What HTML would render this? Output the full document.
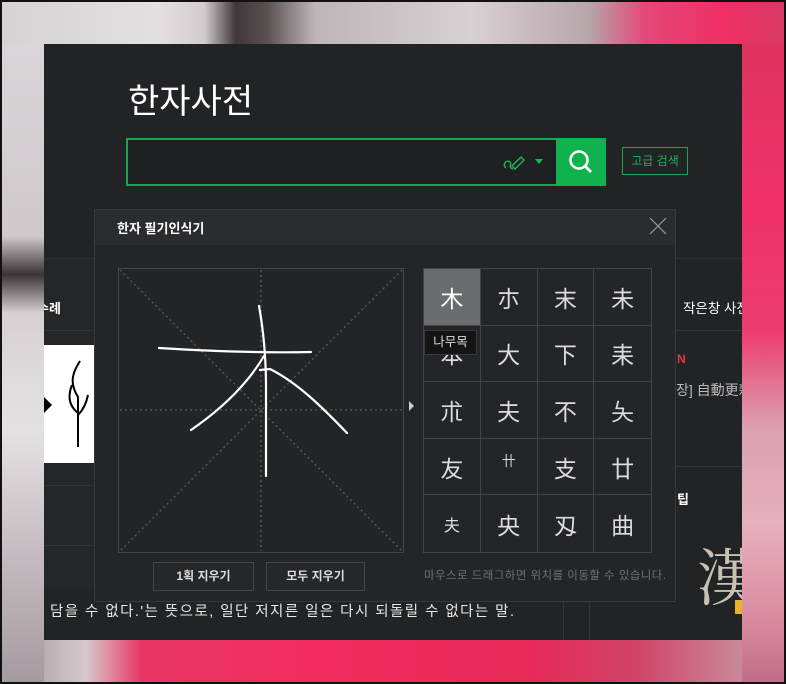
<!DOCTYPE html>
<html><head><meta charset="utf-8"><style>
*{margin:0;padding:0;box-sizing:border-box}
body{width:786px;height:684px;overflow:hidden;position:relative;font-family:"Liberation Sans","Noto Sans CJK KR",sans-serif;
background:linear-gradient(180deg,#d9d4d7 0%,#c8c2c5 40%,#b7aeb2 100%);}
.abs{position:absolute}
.t{color:#fff;white-space:nowrap}
.line{background:#333437;height:1px}
</style></head><body>
<!-- background photo approximation -->
<div class="abs" style="left:0;top:0;width:786px;height:44px;background:linear-gradient(90deg,#d6d2d4 0%,#e4e0e2 20%,#d2cccf 26%,#3f3739 30%,#5a5052 34%,#bdb5b8 40%,#d8d1d3 60%,#b7a5aa 75%,#e5487a 82%,#ef2f66 92%,#d73a62 100%)"></div>
<div class="abs" style="left:0;top:44px;width:44px;height:640px;background:linear-gradient(180deg,#d9d5d8 0%,#cfc9cc 30%,#3a3436 36%,#d6d0d3 42%,#e5e1e3 60%,#c3bbbf 80%,#a59a9f 100%)"></div>
<div class="abs" style="left:742px;top:44px;width:44px;height:640px;background:linear-gradient(180deg,#e0325f 0%,#f0306a 25%,#ec3c70 45%,#dca0b2 60%,#e7b0be 75%,#d98aa0 90%,#c06c85 100%)"></div>
<div class="abs" style="left:44px;top:640px;width:698px;height:44px;background:linear-gradient(90deg,#b8aeb2 0%,#d7c9cd 6%,#e93565 14%,#f22c5e 40%,#e72a58 70%,#d04468 85%,#c9899b 100%)"></div>
<div class="abs" style="left:0;top:0;width:786px;height:684px;border:2px solid #111"></div>

<div class="abs" style="left:44px;top:44px;width:698px;height:596px;background:#222325;overflow:hidden">
  <div class="abs t" style="left:84px;top:30px;font-size:34px;">한자사전</div>
  <div class="abs" style="left:0;top:214px;width:698px;height:1px;background:#2e2f32"></div>
  <div class="abs" style="left:0;top:215px;width:50px;height:330px;background:#252629"></div>
  <div class="abs t" style="left:-7px;top:254px;font-size:13px;font-weight:bold">수례</div>
  <div class="abs line" style="left:0;top:286px;width:50px"></div>
  <div class="abs" style="left:0;top:301px;width:50px;height:118px;background:#fff"></div>
  <svg class="abs" style="left:0;top:301px" width="50" height="118"><path d="M0 52l8 8-8 8z" fill="#000"/><path d="M36 16c-6 10-12 20-2 36v50M28 40c-4 10-4 20 6 28M44 50c-2 10-6 16-10 20" fill="none" stroke="#000" stroke-width="2"/></svg>
  <div class="abs line" style="left:0;top:441px;width:50px"></div>
  <div class="abs line" style="left:0;top:501px;width:50px"></div>
  <div class="abs t" style="left:639px;top:253px;font-size:13.5px">작은창 사전</div>
  <div class="abs line" style="left:632px;top:286px;width:66px"></div>
  <div class="abs" style="left:633px;top:308px;font-size:12px;font-weight:bold;color:#e23b3b">N</div>
  <div class="abs" style="left:632px;top:336px;font-size:14px;color:#bbb;white-space:nowrap">장] 自動更新</div>
  <div class="abs line" style="left:632px;top:422px;width:66px"></div>
  <div class="abs t" style="left:633px;top:445px;font-size:13px;font-weight:bold">팁</div>
  <div class="abs" style="left:653px;top:494px;color:#c9c2b4;font-size:62px;line-height:72px;font-family:'Noto Serif CJK SC',serif">漢</div>
  <div class="abs" style="left:691px;top:556px;width:7px;height:14px;background:#e8b030"></div>
  <div class="abs t" style="left:6px;top:556px;font-size:14.5px;color:#e8e8e8;letter-spacing:1.45px">담을 수 없다.'는 뜻으로, 일단 저지른 일은 다시 되돌릴 수 없다는 말.</div>
  <div class="abs" style="left:519px;top:558px;width:1px;height:38px;background:#333"></div>
  <div class="abs" style="left:545px;top:558px;width:1px;height:38px;background:#333"></div>
</div>

<div class="abs" style="left:126px;top:138px;width:432px;height:48px;border:2px solid #1ca54f;background:#1f2022"></div>
<svg class="abs" style="left:500px;top:150px" width="50" height="26" viewBox="0 0 50 26"><g fill="none" stroke="#1fb456" stroke-width="1.4"><path d="M6 18c-4-3 0-9 4-6 2 2-2 6 3 7"/><path d="M12 16l9-9 3 3-9 9z"/></g><path d="M35 9h8l-4 5z" fill="#1fb456"/></svg>
<div class="abs" style="left:556px;top:138px;width:50px;height:48px;background:#10b250"></div>
<svg class="abs" style="left:565px;top:146px" width="32" height="32" viewBox="0 0 32 32"><circle cx="14" cy="14" r="8.5" fill="none" stroke="#fff" stroke-width="2.6"/><path d="M20 20l6 6" stroke="#fff" stroke-width="2.8"/></svg>
<div class="abs" style="left:622px;top:147px;width:66px;height:28px;border:1px solid #1ca54f;color:#1fb456;font-size:12px;text-align:center;line-height:26px">고급 검색</div>

<!-- popup -->
<div class="abs" style="left:94px;top:209px;width:582px;height:393px;background:#242528;border:1px solid #37383b"></div>
<div class="abs" style="left:95px;top:210px;width:580px;height:35px;background:#2b2c2f"></div>
<div class="abs t" style="left:117px;top:218px;font-size:13px;font-weight:bold">한자 필기인식기</div>
<svg class="abs" style="left:649px;top:217px" width="18" height="18"><path d="M1 1l16 16M17 1L1 17" stroke="#999" stroke-width="1.2"/></svg>

<svg class="abs" style="left:118px;top:268px" width="286" height="285" viewBox="0 0 286 285">
<rect x="0.5" y="0.5" width="285" height="284" fill="#232427" stroke="#46474a"/>
<g stroke="#5a5b5e" stroke-width="1.3" stroke-dasharray="2 3" fill="none">
<path d="M2 2L284 283M284 2L2 283M143 2V283M2 142H284"/></g>
<g fill="none" stroke="#fff" stroke-width="2.2" stroke-linecap="round">
<path d="M41 80C90 83 150 85 193 84"/>
<path d="M141 38C145 60 148 85 148 120C148 160 148 190 148 208"/>
<path d="M146 88C130 115 105 140 73 162"/>
<path d="M142 102L152 101C180 115 205 140 229 165"/>
</g></svg>
<svg class="abs" style="left:409px;top:401px" width="6" height="10"><path d="M0 0l5 5-5 5z" fill="#ccc"/></svg>

<div class="abs" style="left:423px;top:268px;width:229px;height:285px;border:1px solid #444548;display:grid;grid-template-columns:repeat(4,1fr);grid-template-rows:repeat(5,1fr);">
<style>.c{border-right:1px solid #444548;border-bottom:1px solid #444548;color:#ddd;font-size:23px;display:flex;align-items:center;justify-content:center;font-family:"Noto Sans CJK SC",sans-serif}</style>
<div class="c" style="background:#6b6c70;color:#fff">木</div><div class="c">朩</div><div class="c">末</div><div class="c" style="border-right:0">未</div>
<div class="c">本</div><div class="c">大</div><div class="c">下</div><div class="c" style="border-right:0">耒</div>
<div class="c">朮</div><div class="c">夫</div><div class="c">不</div><div class="c" style="border-right:0">夨</div>
<div class="c">友</div><div class="c" style="font-size:14px;align-items:flex-start;padding-top:12px">卄</div><div class="c">支</div><div class="c" style="border-right:0">廿</div>
<div class="c" style="border-bottom:0;font-size:16px">夫</div><div class="c" style="border-bottom:0">央</div><div class="c" style="border-bottom:0">刄</div><div class="c" style="border:0">曲</div>
</div>
<div class="abs" style="left:424px;top:330px;width:53px;height:25px;background:#141415;border:1px solid #3a3a3c;color:#ddd;font-size:12.5px;text-align:center;line-height:23px">나무목</div>

<div class="abs" style="left:153px;top:562px;width:101px;height:29px;border:1px solid #45464a;background:#262729;color:#ddd;font-size:12px;font-weight:bold;text-align:center;line-height:27px">1획 지우기</div>
<div class="abs" style="left:266px;top:562px;width:99px;height:29px;border:1px solid #45464a;background:#262729;color:#ddd;font-size:12px;font-weight:bold;text-align:center;line-height:27px">모두 지우기</div>
<div class="abs" style="left:424px;top:567px;font-size:11.5px;color:#6f7073;white-space:nowrap;letter-spacing:0.45px">마우스로 드래그하면 위치를 이동할 수 있습니다.</div>
</body></html>
